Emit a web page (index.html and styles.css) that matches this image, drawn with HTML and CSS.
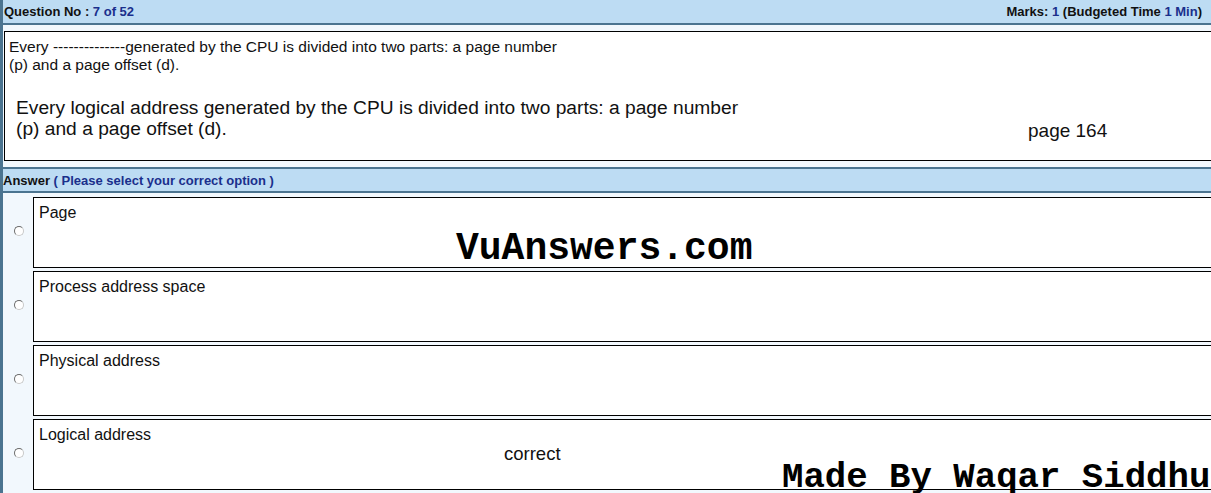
FILE: index.html
```html
<!DOCTYPE html>
<html>
<head>
<meta charset="utf-8">
<link rel="stylesheet" href="styles.css">
</head>
<body>
<div class="page">
  <div class="bar top-bar">
    <span><b>Question No : </b><span class="blue">7 of 52</span></span>
    <span><b>Marks: </b><span class="blue">1</span><b> (Budgeted Time </b><span class="blue">1 Min</span><b>)</b></span>
  </div>
  <div class="q-wrap">
    <div class="q-box">
      <p class="q-small">Every --------------generated by the CPU is divided into two parts: a page number<br>(p) and a page offset (d).</p>
      <div class="q-big-row">
        <p class="q-big">Every logical address generated by the CPU is divided into two parts: a page number<br>(p) and a page offset (d).</p>
        <span class="q-ref">page 164</span>
      </div>
    </div>
  </div>
  <div class="bar ans-bar">
    <b>Answer</b>&nbsp;<b class="blue">( Please select your correct option )</b>
  </div>
  <div class="options">
    <div class="opt">
      <div class="radio-col"><span class="radio"></span></div>
      <div class="opt-box">Page</div>
    </div>
    <div class="opt">
      <div class="radio-col"><span class="radio"></span></div>
      <div class="opt-box">Process address space</div>
    </div>
    <div class="opt">
      <div class="radio-col"><span class="radio"></span></div>
      <div class="opt-box">Physical address</div>
    </div>
    <div class="opt">
      <div class="radio-col"><span class="radio"></span></div>
      <div class="opt-box">Logical address</div>
    </div>
  </div>
  <div class="mark mark-site">VuAnswers.com</div>
  <div class="mark-note">correct</div>
  <div class="mark mark-author">Made By Waqar Siddhu</div>
</div>
</body>
</html>
```

FILE: styles.css
```css
html, body {
  margin: 0;
  padding: 0;
}
body {
  width: 1211px;
  height: 493px;
  overflow: hidden;
  font-family: "Liberation Sans", Arial, sans-serif;
  background: #f2f8fd;
}
.page {
  position: relative;
  height: 493px;
  border-left: 3px solid #4b7490;
  background: #f2f8fd;
}
.blue {
  color: #1a2f8c;
}
.bar {
  background: #bddcf3;
  font-size: 13px;
  color: #111;
  display: flex;
  align-items: center;
}
.top-bar {
  height: 23px;
  border-bottom: 2px solid #4b7490;
  justify-content: space-between;
  padding: 0 9px 0 1px;
  font-weight: bold;
}
.q-wrap {
  padding: 6px 0 6px 1px;
}
.q-box {
  background: #fff;
  border: 1px solid #000;
  border-right: none;
  height: 130px;
  box-sizing: border-box;
  padding: 6px 4px 0 4px;
}
.q-small {
  margin: 0;
  font-size: 15.5px;
  line-height: 18px;
  color: #111;
}
.q-big-row {
  display: flex;
  align-items: flex-end;
  margin-top: 23px;
}
.q-big {
  margin: 0 0 0 7px;
  font-size: 19.2px;
  line-height: 21px;
  color: #111;
  width: 1012px;
}
.q-ref {
  font-size: 19px;
  line-height: 21px;
  color: #111;
  margin-bottom: -2px;
}
.ans-bar {
  height: 22px;
  border-top: 2px solid #4b7490;
  border-bottom: 2px solid #4b7490;
  padding-left: 0;
}
.options {
  padding-top: 4px;
  display: flex;
  flex-direction: column;
  gap: 3px;
}
.opt {
  display: flex;
  height: 71px;
}
.radio-col {
  width: 30px;
  display: flex;
  align-items: center;
  justify-content: center;
  padding-left: 2px;
  padding-bottom: 4px;
  box-sizing: border-box;
}
.radio {
  width: 10px;
  height: 10px;
  border-radius: 50%;
  border: 1px solid #6a6a6a;
  border-right-color: #c8c8c8;
  border-bottom-color: #c8c8c8;
  background: #fff;
  box-sizing: border-box;
}
.opt-box {
  flex: 1;
  background: #fff;
  border: 1px solid #000;
  border-right: none;
  box-sizing: border-box;
  padding: 5px 5px;
  font-size: 16px;
  line-height: 19px;
  color: #111;
}
.mark {
  position: absolute;
  font-family: "Liberation Mono", "Courier New", monospace;
  font-weight: bold;
  color: #000;
  white-space: nowrap;
}
.mark-site {
  left: 453px;
  top: 227px;
  font-size: 38px;
  line-height: 44px;
}
.mark-author {
  left: 779px;
  top: 457px;
  font-size: 35.7px;
  line-height: 42px;
}
.mark-note {
  position: absolute;
  left: 501px;
  top: 444px;
  font-size: 18.5px;
  line-height: 20px;
  color: #111;
}
```
